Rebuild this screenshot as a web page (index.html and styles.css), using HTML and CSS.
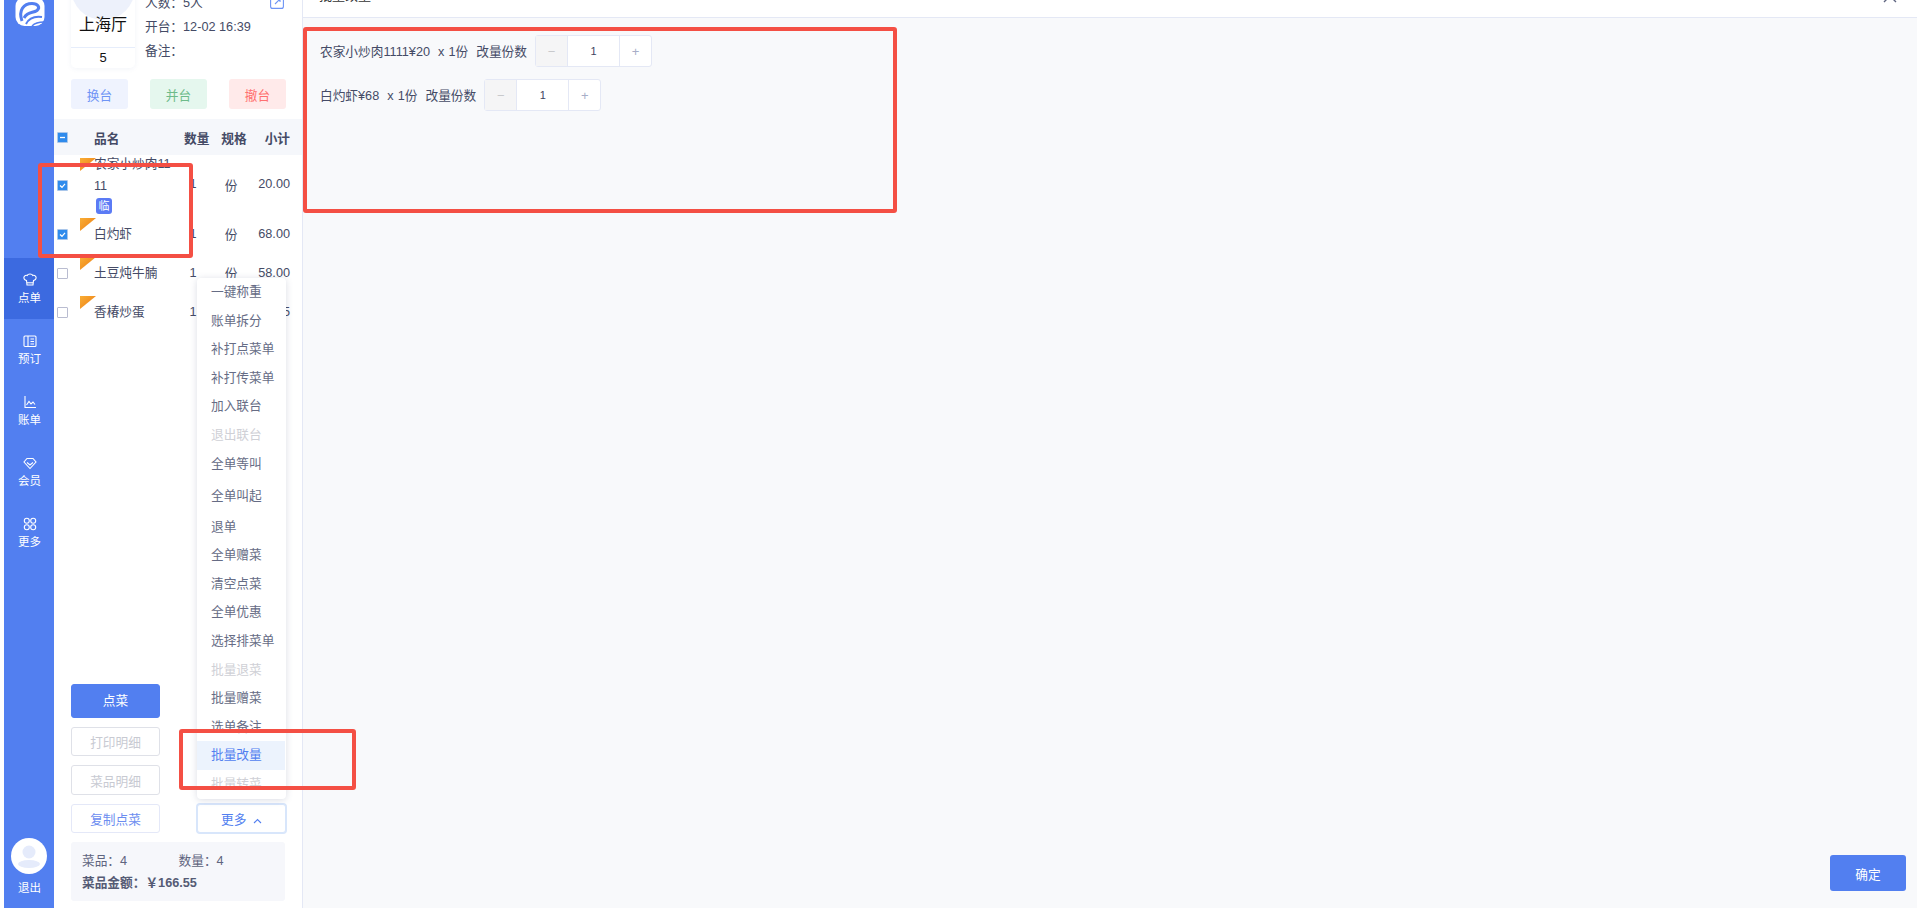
FILE: index.html
```html
<!DOCTYPE html>
<html lang="zh-CN">
<head>
    <meta charset="UTF-8">
    <title>批量改量</title>
    <link rel="stylesheet" href="styles.css">
</head>
<body>
<div class="app">
    <nav class="nav">
        <div class="logo">
            <svg width="30" height="30" viewBox="0 0 30 30">
                <rect x="0.500" y="0" width="29" height="29" rx="9" fill="#fff"/>
                <path d="M7 24C3 13 9 6.500 17 6.500C23 6.500 25.500 10.500 22 13.500C18 16.500 13 14 9 21" fill="none" stroke="#527ff0" stroke-width="3"/>
                <path d="M11 27C14 21 20 19 27 20" fill="none" stroke="#527ff0" stroke-width="2"/>
                <path d="M17 29C20 26 24 25 29 25" fill="none" stroke="#527ff0" stroke-width="1.500"/>
            </svg>
        </div>
        <a class="nav-item active">
            <svg width="14" height="14" viewBox="0 0 14 14" fill="none" stroke="#fff" stroke-width="1.100"><path d="M3.500 8.500C1.500 8 .5 6.500 1 5C1.600 3.400 3.200 3 4.200 3.500C5 1.500 9 1.500 9.800 3.500C10.800 3 12.400 3.400 13 5C13.500 6.500 12.500 8 10.500 8.500L10 13H4Z"/><path d="M4 10.800H10"/></svg>
            <span>点单</span>
        </a>
        <a class="nav-item">
            <svg width="14" height="14" viewBox="0 0 14 14" fill="none" stroke="#fff" stroke-width="1.100"><rect x="1" y="2" width="12" height="10.500" rx="1"/><path d="M5 2V12.500M7.500 5H11M7.500 7.500H11M7.500 10H11"/></svg>
            <span>预订</span>
        </a>
        <a class="nav-item">
            <svg width="14" height="14" viewBox="0 0 14 14" fill="none" stroke="#fff" stroke-width="1.100"><path d="M2 1V12.500H13"/><path d="M3.500 10L6 6.500L8 9L10 7L12 9.500"/></svg>
            <span>账单</span>
        </a>
        <a class="nav-item">
            <svg width="14" height="14" viewBox="0 0 14 14" fill="none" stroke="#fff" stroke-width="1.100"><path d="M4 2.500H10L13 6L7 12.500L1 6Z"/><path d="M4 6.500L7 9L10 6.500"/></svg>
            <span>会员</span>
        </a>
        <a class="nav-item">
            <svg width="14" height="14" viewBox="0 0 14 14" fill="none" stroke="#fff" stroke-width="1.100"><circle cx="3.800" cy="3.800" r="2.500"/><circle cx="10.200" cy="3.800" r="2.500"/><circle cx="3.800" cy="10.200" r="2.500"/><circle cx="10.200" cy="10.200" r="2.500"/></svg>
            <span>更多</span>
        </a>
        <div class="logout">
            <div class="avatar">
                <svg width="36" height="36" viewBox="0 0 36 36"><circle cx="18" cy="18" r="18" fill="#fff"/><circle cx="18" cy="14" r="6.500" fill="#e5ebfb"/><ellipse cx="18" cy="26" rx="11" ry="4" fill="#e5ebfb"/></svg>
            </div>
            <span>退出</span>
        </div>
    </nav>

    <aside class="panel">
        <div class="room">
            <div class="room-card">
                <div class="room-circle"></div>
                <div class="room-name">上海厅</div>
                <div class="room-num">5</div>
            </div>
            <div class="room-info">
                <div>人数：5人</div>
                <div>开台：12-02 16:39</div>
                <div>备注：</div>
            </div>
            <svg class="edit-icon" width="14" height="18" viewBox="0 0 14 18" fill="none" stroke="#6e94f5" stroke-width="1.100"><rect x="0.600" y="0.600" width="12.800" height="16.800" rx="2"/><path d="M5 13L10 8M7 8H10V11"/></svg>
        </div>

        <div class="room-btns">
            <button class="soft blue">换台</button>
            <button class="soft green">并台</button>
            <button class="soft red">撤台</button>
        </div>

        <div class="table-head">
            <span class="check on"><svg width="7" height="7" viewBox="0 0 7 7"><path d="M1 3.500H6" stroke="#fff" stroke-width="1.300"/></svg></span>
            <span>品名</span>
            <span>数量</span>
            <span class="center">规格</span>
            <span class="price">小计</span>
        </div>

        <div class="rows">
            <div class="row tall">
                <span class="check on"><svg width="7" height="7" viewBox="0 0 7 7" fill="none"><path d="M1 3.500L3 5.300L6 1.800" stroke="#fff" stroke-width="1.200"/></svg></span>
                <div class="dish">
                    <div>农家小炒肉1111</div>
                    <span class="tag">临</span>
                </div>
                <span class="center">1</span>
                <span class="center">份</span>
                <span class="price">20.00</span>
            </div>
            <div class="row">
                <span class="check on"><svg width="7" height="7" viewBox="0 0 7 7" fill="none"><path d="M1 3.500L3 5.300L6 1.800" stroke="#fff" stroke-width="1.200"/></svg></span>
                <div class="dish">白灼虾</div>
                <span class="center">1</span>
                <span class="center">份</span>
                <span class="price">68.00</span>
            </div>
            <div class="row">
                <span class="check"></span>
                <div class="dish">土豆炖牛腩</div>
                <span class="center">1</span>
                <span class="center">份</span>
                <span class="price">58.00</span>
            </div>
            <div class="row">
                <span class="check"></span>
                <div class="dish">香椿炒蛋</div>
                <span class="center">1</span>
                <span class="center">份</span>
                <span class="price">20.55</span>
            </div>
        </div>

        <div class="actions">
            <button class="act primary">点菜</button>
            <button class="act muted">打印明细</button>
            <button class="act muted taller">菜品明细</button>
            <button class="act copy">复制点菜</button>
            <button class="act more">更多
                <svg width="9" height="6" viewBox="0 0 9 6" fill="none"><path d="M1 5L4.500 1.500L8 5" stroke="#527ff0" stroke-width="1.100"/></svg>
            </button>
        </div>

        <div class="summary">
            <div class="summary-line">
                <span class="summary-cell">菜品：4</span>
                <span>数量：4</span>
            </div>
            <div class="summary-total">菜品金额：￥166.55</div>
        </div>

        <ul class="menu">
            <li>一键称重</li>
            <li>账单拆分</li>
            <li>补打点菜单</li>
            <li>补打传菜单</li>
            <li>加入联台</li>
            <li class="off">退出联台</li>
            <li>全单等叫</li>
            <li class="gap-a">全单叫起</li>
            <li class="gap-b">退单</li>
            <li>全单赠菜</li>
            <li>清空点菜</li>
            <li>全单优惠</li>
            <li>选择排菜单</li>
            <li class="off">批量退菜</li>
            <li>批量赠菜</li>
            <li>选单备注</li>
            <li class="hover">批量改量</li>
            <li class="off">批量转菜</li>
        </ul>
    </aside>

    <main class="main">
        <header class="main-head">
            <span class="main-title">批量改量</span>
            <svg class="close" width="14" height="14" viewBox="0 0 14 14" fill="none"><path d="M1 1L13 13M13 1L1 13" stroke="#5f6580" stroke-width="1.400"/></svg>
        </header>
        <section class="change-list">
            <div class="change-row">
                <span class="change-text">农家小炒肉1111¥20&nbsp; x 1份&nbsp; 改量份数</span>
                <div class="stepper">
                    <span class="step minus">−</span>
                    <span class="step-val">1</span>
                    <span class="step plus">+</span>
                </div>
            </div>
            <div class="change-row">
                <span class="change-text">白灼虾¥68&nbsp; x 1份&nbsp; 改量份数</span>
                <div class="stepper">
                    <span class="step minus">−</span>
                    <span class="step-val">1</span>
                    <span class="step plus">+</span>
                </div>
            </div>
        </section>
        <footer class="main-foot">
            <button class="confirm">确定</button>
        </footer>
    </main>

    <!-- annotation boxes drawn on the screenshot -->
    <div class="mark mark-rows"></div>
    <div class="mark mark-item"></div>
    <div class="mark mark-list"></div>
</div>
</body>
</html>
```

FILE: styles.css
```css
* { box-sizing: border-box; }
html, body { margin: 0; height: 100%; overflow: hidden; }
body { font-family: "Liberation Sans", "Noto Sans CJK SC", sans-serif; font-size: 12.7px; color: #454b66; background: #fff; }
button { font-family: inherit; font-size: 12.7px; cursor: pointer; }

.app { position: relative; display: flex; height: 908px; padding-left: 4px; }

/* left nav */
.nav { width: 50px; background: #527ff0; display: flex; flex-direction: column; color: #fff; }
.logo { height: 258px; padding: 0 0 0 11px; margin-top: -3px; flex: none; }
.logo svg { display: block; }
.nav-item { height: 61px; flex: none; display: flex; flex-direction: column; align-items: center; padding: 15px 0 0 1px; gap: 3px; font-size: 11.500px; line-height: 16px; }
.nav-item.active { background: #3c6ae0; padding-top: 14px; gap: 4px; }
.logo + .nav-item { margin-top: 3px; }
.logout { margin-top: auto; display: flex; flex-direction: column; align-items: center; padding: 0 0 12px 1px; font-size: 11.500px; line-height: 16px; gap: 6px; }
.avatar { width: 36px; height: 36px; margin-left: -1px; }
.avatar svg { display: block; }

/* order panel */
.panel { position: relative; width: 249px; flex: none; border-right: 1px solid #e4e8f5; display: flex; flex-direction: column; background: #fff; }
.room { position: relative; display: flex; height: 68px; padding-left: 17px; gap: 10px; }
.room-card { width: 64px; height: 112px; margin-top: -44px; flex: none; border-radius: 0 0 5px 5px; box-shadow: 0 1px 5px rgba(90, 110, 180, .08); text-align: center; color: #111; background: #fff; }
.room-circle { width: 64px; height: 64px; border-radius: 50%; background: #edf1fb; }
.room-name { position: relative; height: 32px; margin-top: -4px; font-size: 16px; line-height: 18px; border-bottom: 1px solid #e6edfb; }
.room-num { font-size: 13px; line-height: 19px; }
.room-info { margin-top: -9px; line-height: 24px; }
.edit-icon { position: absolute; right: 18px; top: -9px; }
.room-btns { display: flex; gap: 22px; padding-left: 17px; margin-top: 11px; }
.soft { width: 57px; height: 30px; border: 0; border-radius: 3px; }
.soft.blue { background: #eff3fe; color: #6e94f5; }
.soft.green { background: #e5f7ee; color: #6dbb8a; }
.soft.red { background: #ffeaea; color: #ff7070; }

.table-head { display: grid; grid-template-columns: 40px 90px 26px 48px 1fr; align-items: center; height: 36px; margin-top: 10px; background: #f5f7fb; font-weight: bold; }
.check { width: 11px; height: 11px; margin-left: 3px; border: 1px solid #b9bcd0; border-radius: 1px; background: #fff; display: flex; align-items: center; justify-content: center; }
.check.on { background: #2f8bec; border-color: #a9c6ea; }
.center { text-align: center; }
.price { text-align: right; padding-right: 12px; }
.rows { margin-top: 3px; flex: 1; }
.row { position: relative; display: grid; grid-template-columns: 40px 85px 28px 48px 1fr; grid-template-rows: 31px; align-items: center; padding-bottom: 8px; }
.row .check { margin-top: 2px; }
.row.tall { grid-template-rows: 52px; }
.row::before { content: ""; position: absolute; left: 26px; top: 0; width: 16px; height: 13px; background: linear-gradient(135deg, #f9ae36, #ec7a10); clip-path: polygon(0 0, 100% 0, 0 100%); }
.dish { line-height: 22px; word-break: break-all; max-width: 80px; }
.tall .dish { margin-top: 4px; }
.tag { display: block; width: 16px; height: 16px; margin: 1px 0 5px 2px; border-radius: 3px; background: #5b7bf5; color: #fff; font-size: 11px; line-height: 16px; text-align: center; }

.actions { display: grid; grid-template-columns: 89px 89px; column-gap: 37px; row-gap: 9px; padding-left: 17px; }
.act { height: 29px; border-radius: 3px; background: #fff; border: 1px solid #e3e6f2; grid-column: 1; }
.act.primary { height: 34px; padding-bottom: 4px; background: #527ff0; border-color: #527ff0; color: #fff; }
.act.muted { color: #c8cad2; border-color: #dfe1e8; }
.act.taller { height: 30px; }
.act.copy { color: #6b8df0; border-color: #e4e8f8; }
.act.more { grid-column: 2; grid-row: 4; color: #527ff0; box-shadow: 0 0 0 1px #d8e6fb; border: 1px solid #d8e6fb; }
.act.more svg { margin-left: 3px; }
.summary { width: 214px; height: 59px; margin: 9px 0 7px 17px; padding: 8px 11px 0; background: #f6f7fb; border-radius: 3px; line-height: 22px; color: #5f6580; }
.summary-cell { display: inline-block; width: 96px; margin-right: -3px; }
.summary-total { font-weight: bold; color: #555b75; }

/* popup under the 更多 button */
.menu { position: absolute; left: 143px; top: 278px; width: 89px; height: 521px; margin: 0; padding: 0; list-style: none; overflow: hidden; background: #fff; border-radius: 4px; box-shadow: 0 1px 7px rgba(70, 80, 120, .2); }
.menu li { height: 28.600px; line-height: 28.600px; padding-left: 14px; color: #666c85; white-space: nowrap; }
.menu li.off { color: #cfd0d6; }
.menu li.hover { background: #ecf3fd; color: #527ff0; margin-right: 1px; }
.menu li.gap-a { margin-top: 3.400px; }
.menu li.gap-b { margin-top: 2.400px; }

/* main */
.main { flex: 1; display: flex; flex-direction: column; background: #f8f9fb; min-width: 0; }
.main-head { position: relative; height: 18px; flex: none; background: #fff; border-bottom: 1px solid #e4e8f5; padding-left: 16px; overflow: hidden; }
.main-title { display: block; line-height: 14px; margin-top: -11px; font-size: 13px; color: #333; }
.close { position: absolute; right: 20px; top: -11px; }
.change-list { flex: 1; display: flex; flex-direction: column; gap: 12px; padding: 17px 0 0 17px; }
.change-row { display: flex; align-items: center; gap: 8px; }
.change-text { font-size: 12.700px; word-spacing: .5px; white-space: nowrap; margin-top: -2px; }
.stepper { display: flex; width: 117px; height: 32px; border: 1px solid #e4e8f5; border-radius: 3px; background: #fff; }
.step { width: 32px; flex: none; display: flex; align-items: center; justify-content: center; font-size: 13px; color: #a8aec8; }
.step.minus { background: #f5f5f6; color: #c8c9cc; border-right: 1px solid #e4e8f5; }
.step.plus { border-left: 1px solid #e4e8f5; }
.step-val { flex: 1; display: flex; align-items: center; justify-content: center; font-size: 11px; color: #3e4460; }
.main-foot { display: flex; justify-content: flex-end; padding: 0 11px 17px 0; }
.confirm { width: 76px; height: 36px; border: 0; border-radius: 3px; background: #527ff0; color: #fff; }

/* red annotation rectangles */
.mark { position: absolute; border: 4px solid #f44f44; border-radius: 3px; pointer-events: none; }
.mark-rows { left: 38px; top: 163px; width: 155px; height: 95px; }
.mark-item { left: 179px; top: 729px; width: 177px; height: 61px; }
.mark-list { left: 303px; top: 27px; width: 594px; height: 186px; }
```
